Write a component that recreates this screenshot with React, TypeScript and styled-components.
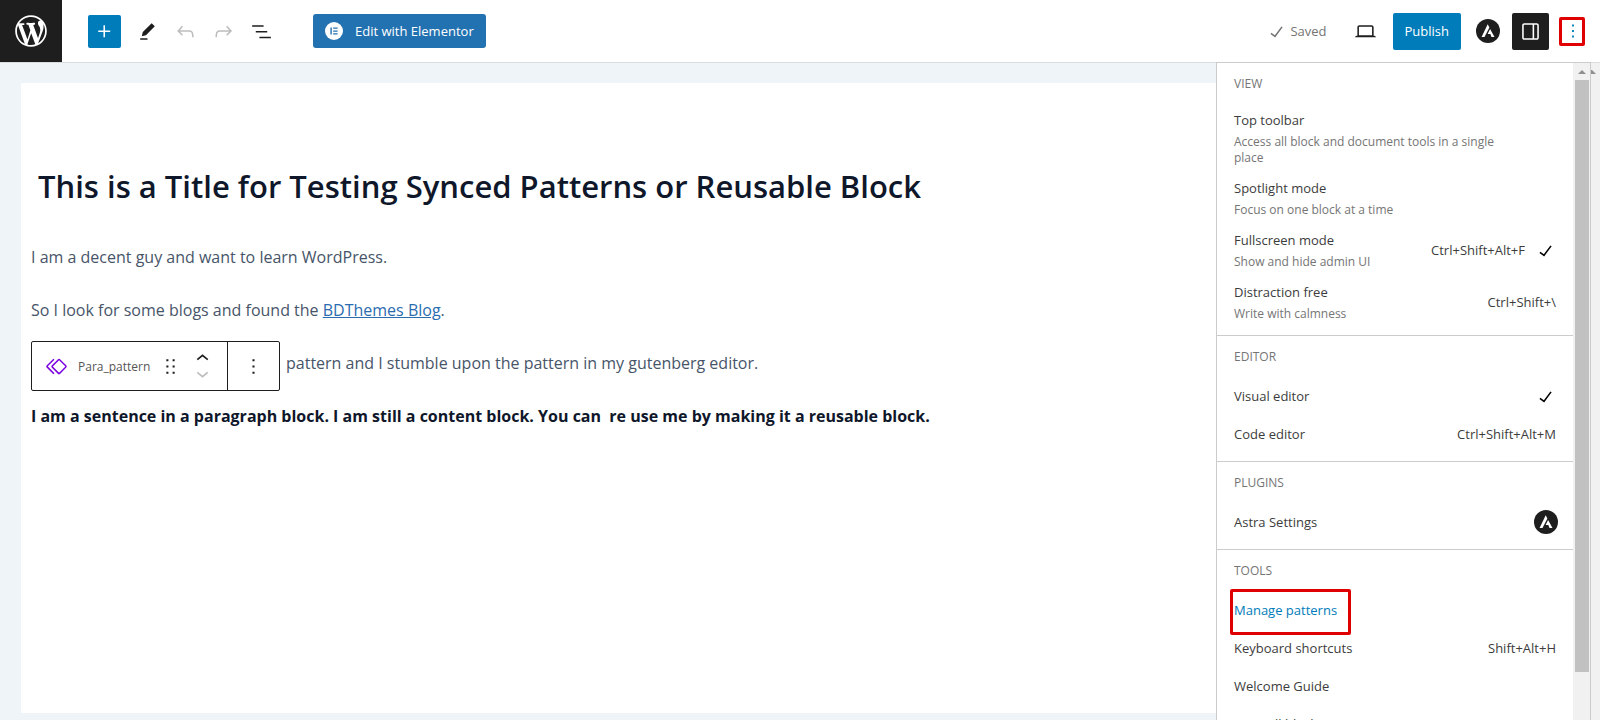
import React from "react";
import styled, { createGlobalStyle, css } from "styled-components";

const GlobalStyle = createGlobalStyle`
  *, *::before, *::after { box-sizing: border-box; }
  body { margin: 0; background: #fff; }
  body, button { font-family: "Open Sans", "Noto Sans", sans-serif; }
  button { margin: 0; padding: 0; border: 0; background: none; color: inherit; cursor: pointer; }
  h1, h2, p { margin: 0; font-weight: 400; }
`;

const paths = {
  wordpress:
    "M20 10c0-5.51-4.49-10-10-10C4.48 0 0 4.49 0 10c0 5.52 4.48 10 10 10 5.51 0 10-4.48 10-10zM7.78 15.37L4.37 6.22c.55-.02 1.17-.08 1.17-.08.5-.06.44-1.13-.06-1.11 0 0-1.45.11-2.37.11-.18 0-.37 0-.58-.01C4.12 2.69 6.87 1.11 10 1.11c2.33 0 4.45.87 6.05 2.34-.68-.11-1.65.39-1.65 1.58 0 .74.45 1.36.9 2.1.35.61.55 1.36.55 2.46 0 1.49-1.4 5-1.4 5l-3.03-8.37c.54-.02.82-.17.82-.17.5-.05.44-1.25-.06-1.22 0 0-1.44.12-2.38.12-.87 0-2.33-.12-2.33-.12-.5-.03-.56 1.2-.06 1.22l.92.08 1.26 3.41zM17.41 10c.24-.64.74-1.87.43-4.25.7 1.29 1.05 2.71 1.05 4.25 0 3.29-1.73 6.24-4.4 7.78.97-2.59 1.94-5.2 2.92-7.78zM6.1 18.09C3.12 16.65 1.11 13.53 1.11 10c0-1.3.23-2.48.72-3.59C3.25 10.3 4.67 14.2 6.1 18.09zm4.03-6.63l2.58 6.98c-.86.29-1.76.45-2.71.45-.79 0-1.57-.11-2.29-.33.81-2.38 1.62-4.74 2.42-7.1z",
  plus: "M11 12.5V17.5H12.5V12.5H17.5V11H12.5V6H11V11H6V12.5H11Z",
  edit: "m19 7-3-3-8.5 8.5-1 4 4-1L19 7Zm-7 11.5H5V20h7v-1.5Z",
  undo: "M18.3 11.7c-.6-.6-1.4-.9-2.3-.9H6.7l2.9-3.3-1.1-1-4.5 5L8.5 16l1-1-2.7-2.7H16c.5 0 .9.2 1.3.5 1 1 1 3.4 1 4.5v.3h1.5v-.2c0-1.5 0-4.3-1.5-5.7z",
  redo: "M15.6 6.5l-1.1 1 2.9 3.3H8c-.9 0-1.7.3-2.3.9-1.4 1.5-1.4 4.2-1.4 5.6v.2h1.5v-.3c0-1.1 0-3.5 1-4.5.3-.3.7-.5 1.3-.5h9.2L14.5 15l1.1 1.1 4.6-4.6-4.6-5z",
  list: "M3 6h11v1.5H3V6Zm3.5 5.5h11V13h-11v-1.5ZM21 17H10v1.5h11V17Z",
  check: "M16.7 7.1l-6.3 8.5-3.3-2.5-.9 1.2 4.5 3.4L17.9 8z",
  desktop:
    "M20.5 16h-.7V8c0-1.1-.9-2-2-2H6.2c-1.1 0-2 .9-2 2v8h-.7c-.8 0-1.5.7-1.5 1.5h20c0-.8-.7-1.5-1.5-1.5zM5.7 8c0-.3.2-.5.5-.5h11.6c.3 0 .5.2.5.5v7.6H5.7V8z",
  drawer:
    "M18 4H6c-1.1 0-2 .9-2 2v12c0 1.1.9 2 2 2h12c1.1 0 2-.9 2-2V6c0-1.1-.9-2-2-2zm-4 14.5H6c-.3 0-.5-.2-.5-.5V6c0-.3.2-.5.5-.5h8v13zm4.5-.5c0 .3-.2.5-.5.5h-2.5v-13H18c.3 0 .5.2.5.5v12z",
  more: "M13 19h-2v-2h2v2zm0-6h-2v-2h2v2zm0-6h-2V5h2v2z",
  pattern:
    "M21.3 10.8l-5.6-5.6c-.7-.7-1.8-.7-2.5 0l-5.6 5.6c-.7.7-.7 1.8 0 2.5l5.6 5.6c.3.3.8.5 1.2.5s.9-.2 1.2-.5l5.6-5.6c.8-.7.8-1.9.1-2.5zm-1 1.4l-5.6 5.6c-.1.1-.3.1-.4 0l-5.6-5.6c-.1-.1-.1-.3 0-.4l5.6-5.6s.1-.1.2-.1.1 0 .2.1l5.6 5.6c.1.1.1.3 0 .4zm-16.6-.4L10 5.5l-1-1-6.3 6.3c-.7.7-.7 1.8 0 2.5L9 19.5l1.1-1.1-6.3-6.3c-.2 0-.2-.2-.1-.3z",
  drag: "M8 7h2V5H8v2zm0 6h2v-2H8v2zm0 6h2v-2H8v2zm6-14v2h2V5h-2zm0 8h2v-2h-2v2zm0 6h2v-2h-2v2z",
  up: "M6.5 12.4L12 8l5.5 4.4-.9 1.2L12 10l-4.5 3.6-1-1.2z",
  down: "M17.5 11.6L12 16l-5.5-4.4.9-1.2L12 14l4.5-3.6 1 1.2z",
};

function Icon({ name, size = 25, box = "0 0 24 24" }: { name: keyof typeof paths; size?: number; box?: string }) {
  return (
    <svg width={size} height={size} viewBox={box} fill="currentColor" aria-hidden="true">
      <path d={paths[name]} />
    </svg>
  );
}

function AstraIcon() {
  return (
    <svg width="24" height="24" viewBox="0 0 24 24" aria-hidden="true">
      <circle cx="12" cy="12" r="12" fill="#1e1e1e" />
      <path d="M11.7 5.3 5.6 18h2.9l4.9-9.5z" fill="#fff" />
      <path d="m14.1 10-2.5 5h2.7l1.2 3h3z" fill="#fff" />
    </svg>
  );
}

function ElementorIcon() {
  return (
    <svg width="18" height="18" viewBox="0 0 18 18" aria-hidden="true">
      <circle cx="9" cy="9" r="9" fill="#fff" />
      <path d="M5.4 5.4h1.4v7.2H5.4zM8.2 5.4h4.4v1.3H8.2zM8.2 8.4h4.4v1.3H8.2zM8.2 11.3h4.4v1.3H8.2z" fill="#2271b1" />
    </svg>
  );
}

const Page = styled.div`
  position: relative;
  display: flex;
  flex-direction: column;
  height: 100vh;
  overflow: hidden;
`;

const Header = styled.header`
  display: flex;
  align-items: center;
  justify-content: space-between;
  flex: none;
  height: 63px;
  padding-right: 15px;
  border-bottom: 1px solid #dcdcde;
  color: #1e1e1e;
`;

const HeaderGroup = styled.div<{ $gap: number }>`
  display: flex;
  align-items: center;
  gap: ${(p) => p.$gap}px;
`;

const HomeLink = styled.a`
  display: grid;
  place-items: center;
  width: 62px;
  height: 62px;
  margin-right: 14px;
  background: #1e1e1e;
  color: #fff;
`;

const ToolButton = styled.button<{ $tone?: "primary" | "dark"; $size?: number }>`
  display: grid;
  place-items: center;
  width: ${(p) => p.$size ?? 26}px;
  height: ${(p) => p.$size ?? 26}px;
  border-radius: 2px;
  &:disabled { color: #bdbdbd; }
  ${(p) => p.$tone && css`
    background: ${p.$tone === "dark" ? "#1e1e1e" : "#007cba"};
    color: #fff;
  `}
`;

const InserterButton = styled(ToolButton)`
  margin-right: 1px;
`;

const ElementorButton = styled.button`
  display: flex;
  align-items: center;
  gap: 12px;
  height: 34px;
  margin-left: 27px;
  padding: 0 12px;
  border-radius: 3px;
  background: #2271b1;
  color: #fff;
  font-size: 13px;
  line-height: 20px;
`;

const Saved = styled.span`
  display: flex;
  align-items: center;
  gap: 1px;
  margin-right: 15px;
  color: #757575;
  font-size: 13px;
`;

const PublishButton = styled.button`
  height: 37px;
  padding: 0 12px;
  border-radius: 2px;
  background: #007cba;
  color: #fff;
  font-size: 13px;
`;

const OptionsButton = styled.button`
  display: grid;
  place-items: center;
  width: 26px;
  height: 29px;
  border: 3px solid #e00000;
  border-radius: 2px;
  color: #007cba;
`;

const Workspace = styled.main`
  display: flex;
  flex: 1;
  min-height: 0;
  padding: 20px 9px 7px 21px;
  background: #eff4f9;
`;

const Sheet = styled.article`
  flex: 1;
  padding: 80px 10px 0;
  background: #fff;
  color: #475569;
  font-size: 16px;
  line-height: 29px;
`;

const Title = styled.h1`
  padding-left: 7px;
  margin-bottom: 34px;
  color: #0f172a;
  font-size: 31px;
  font-weight: 600;
  line-height: 46px;
`;

const Paragraph = styled.p<{ $strong?: boolean }>`
  margin-bottom: 24px;
  ${(p) => p.$strong && css`
    color: #0f172a;
    font-weight: 700;
    white-space: pre-wrap;
  `}
`;

const TextLink = styled.a`
  color: #2b6cb0;
  text-decoration: underline;
`;

const PatternBlock = styled.div`
  position: relative;
  padding-left: 255px;
`;

const BlockToolbar = styled.div`
  position: absolute;
  top: -8px;
  left: 0;
  display: flex;
  width: 249px;
  height: 50px;
  border: 1px solid #1e1e1e;
  border-radius: 2px;
  background: #fff;
  color: #1e1e1e;
`;

const BlockTools = styled.div`
  display: flex;
  align-items: center;
  flex: 1;
  padding-left: 12px;
  gap: 7px;
  border-right: 1px solid #1e1e1e;
`;

const BlockName = styled.button`
  display: flex;
  align-items: center;
  gap: 9px;
  color: #555;
  font-size: 12px;
  svg { color: #7a00df; }
`;

const Movers = styled.div`
  display: flex;
  flex-direction: column;
`;

const MoverButton = styled.button`
  height: 15px;
  line-height: 0;
  &:disabled { color: #bdbdbd; }
  svg { margin: -5px 0; }
`;

const MoreButton = styled.button`
  display: grid;
  place-items: center;
  width: 51px;
`;

const MenuPanel = styled.aside`
  position: absolute;
  top: 62px;
  right: 9px;
  bottom: 0;
  display: flex;
  width: 375px;
  border: solid #ccc;
  border-width: 1px 1px 0;
  background: #fff;
`;

const MenuBody = styled.div`
  flex: 1;
  overflow: hidden;
`;

const MenuGroup = styled.section`
  padding: 13px 17px 7px;
  border-bottom: 1px solid #ccc;
  & + & { padding-bottom: 8px; }
`;

const GroupLabel = styled.h2`
  margin-bottom: 12px;
  color: #757575;
  font-size: 12px;
  font-weight: 500;
  line-height: 16px;
`;

const MenuRow = styled.button`
  display: flex;
  align-items: center;
  justify-content: space-between;
  width: 100%;
  min-height: 38px;
  padding: 6px 0;
  color: #3c3c3c;
  font-size: 13px;
  line-height: 21px;
  text-align: left;
`;

const RowText = styled.span`
  display: flex;
  flex-direction: column;
  gap: 3px;
  max-width: 270px;
`;

const RowHint = styled.span`
  color: #757575;
  font-size: 12px;
  line-height: 16px;
`;

const RowEnd = styled.span`
  display: flex;
  align-items: center;
  gap: 8px;
  svg {
    margin: -2px -2px -2px 0;
    color: #000;
  }
`;

const LinkRow = styled.div`
  display: flex;
  align-items: center;
  height: 38px;
  font-size: 13px;
  line-height: 21px;
`;

const MenuLink = styled.a`
  position: relative;
  color: #007cba;
  text-decoration: none;
  &::after {
    content: "";
    position: absolute;
    inset: -11px -14px -14px -4px;
    border: 3px solid #e00000;
    border-radius: 2px;
  }
`;

const Track = styled.div<{ $wide?: boolean }>`
  display: flex;
  flex-direction: column;
  align-items: center;
  width: ${(p) => (p.$wide ? 17 : 9)}px;
  padding-top: 7px;
  background: #f1f1f1;
  color: #8f8f8f;
  overflow: hidden;
`;

const PageTrack = styled(Track)`
  position: absolute;
  top: 63px;
  right: 0;
  bottom: 0;
  align-items: flex-start;
`;

const Thumb = styled.div`
  width: 14px;
  height: 91%;
  margin-top: 6px;
  background: #c1c1c1;
`;

const Arrow = () => (
  <svg width="8" height="4" viewBox="0 0 8 4" fill="currentColor" aria-hidden="true">
    <path d="M0 4 4 0l4 4z" />
  </svg>
);

const HalfArrow = () => (
  <svg width="5" height="4" viewBox="0 0 5 4" fill="currentColor" aria-hidden="true">
    <path d="M0 0h1l4 4H0z" />
  </svg>
);

type Entry = { label: string; hint?: string; keys?: string; checked?: boolean; icon?: React.ReactNode; href?: string };

const groups: { title: string; entries: Entry[] }[] = [
  {
    title: "VIEW",
    entries: [
      { label: "Top toolbar", hint: "Access all block and document tools in a single place" },
      { label: "Spotlight mode", hint: "Focus on one block at a time" },
      { label: "Fullscreen mode", hint: "Show and hide admin UI", keys: "Ctrl+Shift+Alt+F", checked: true },
      { label: "Distraction free", hint: "Write with calmness", keys: "Ctrl+Shift+\\" },
    ],
  },
  {
    title: "EDITOR",
    entries: [
      { label: "Visual editor", checked: true },
      { label: "Code editor", keys: "Ctrl+Shift+Alt+M" },
    ],
  },
  { title: "PLUGINS", entries: [{ label: "Astra Settings", icon: <AstraIcon /> }] },
  {
    title: "TOOLS",
    entries: [
      { label: "Manage patterns", href: "#patterns" },
      { label: "Keyboard shortcuts", keys: "Shift+Alt+H" },
      { label: "Welcome Guide" },
      { label: "Copy all blocks" },
    ],
  },
];

function MenuEntry({ label, hint, keys, checked, icon, href }: Entry) {
  if (href) {
    return (
      <LinkRow>
        <MenuLink href={href}>{label}</MenuLink>
      </LinkRow>
    );
  }
  return (
    <MenuRow type="button">
      <RowText>
        {label}
        {hint && <RowHint>{hint}</RowHint>}
      </RowText>
      <RowEnd>
        {keys}
        {checked && <Icon name="check" />}
        {icon}
      </RowEnd>
    </MenuRow>
  );
}

export default function App() {
  return (
    <>
      <GlobalStyle />
      <Page>
        <Header>
          <HeaderGroup $gap={12}>
            <HomeLink href="#dashboard" aria-label="View posts">
              <Icon name="wordpress" size={38} box="-2 -2 24 24" />
            </HomeLink>
            <InserterButton $tone="primary" $size={33} aria-label="Add block"><Icon name="plus" /></InserterButton>
            <ToolButton aria-label="Tools"><Icon name="edit" /></ToolButton>
            <ToolButton disabled aria-label="Undo"><Icon name="undo" /></ToolButton>
            <ToolButton disabled aria-label="Redo"><Icon name="redo" /></ToolButton>
            <ToolButton aria-label="Document overview"><Icon name="list" /></ToolButton>
            <ElementorButton><ElementorIcon />Edit with Elementor</ElementorButton>
          </HeaderGroup>
          <HeaderGroup $gap={11}>
            <Saved><Icon name="check" />Saved</Saved>
            <HeaderGroup $gap={14}>
              <ToolButton aria-label="Preview"><Icon name="desktop" /></ToolButton>
              <PublishButton>Publish</PublishButton>
              <ToolButton aria-label="Astra settings"><AstraIcon /></ToolButton>
            </HeaderGroup>
            <HeaderGroup $gap={10}>
              <ToolButton $tone="dark" $size={37} aria-label="Settings"><Icon name="drawer" /></ToolButton>
              <OptionsButton aria-label="Options"><Icon name="more" size={22} /></OptionsButton>
            </HeaderGroup>
          </HeaderGroup>
        </Header>
        <Workspace>
          <Sheet>
            <Title>This is a Title for Testing Synced Patterns or Reusable Block</Title>
            <Paragraph>I am a decent guy and want to learn WordPress.</Paragraph>
            <Paragraph>
              So I look for some blogs and found the <TextLink href="#blog">BDThemes Blog</TextLink>.
            </Paragraph>
            <PatternBlock>
              <Paragraph>pattern and I stumble upon the pattern in my gutenberg editor.</Paragraph>
              <BlockToolbar role="toolbar" aria-label="Block tools">
                <BlockTools>
                  <BlockName><Icon name="pattern" />Para_pattern</BlockName>
                  <ToolButton aria-label="Drag"><Icon name="drag" /></ToolButton>
                  <Movers>
                    <MoverButton aria-label="Move up"><Icon name="up" /></MoverButton>
                    <MoverButton disabled aria-label="Move down"><Icon name="down" /></MoverButton>
                  </Movers>
                </BlockTools>
                <MoreButton aria-label="Block options"><Icon name="more" /></MoreButton>
              </BlockToolbar>
            </PatternBlock>
            <Paragraph $strong>
              {"I am a sentence in a paragraph block. I am still a content block. You can  re use me by making it a reusable block."}
            </Paragraph>
          </Sheet>
        </Workspace>
        <MenuPanel aria-label="Options">
          <MenuBody>
            {groups.map((g) => (
              <MenuGroup key={g.title}>
                <GroupLabel>{g.title}</GroupLabel>
                {g.entries.map((e) => <MenuEntry key={e.label} {...e} />)}
              </MenuGroup>
            ))}
          </MenuBody>
          <Track $wide><Arrow /><Thumb /></Track>
        </MenuPanel>
        <PageTrack><HalfArrow /></PageTrack>
      </Page>
    </>
  );
}
